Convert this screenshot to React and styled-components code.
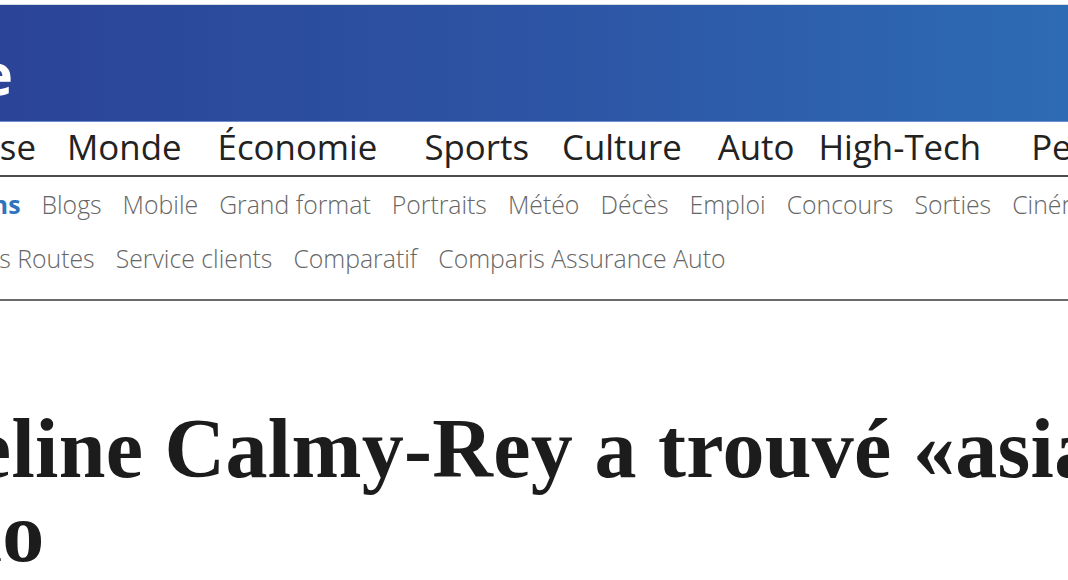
import React from 'react';
import styled, { createGlobalStyle } from 'styled-components';

const GlobalStyle = createGlobalStyle`
  html, body {
    margin: 0;
    padding: 0;
    background: #fff;
    overflow: hidden;
  }
  body {
    font-family: "Open Sans", "Liberation Sans", sans-serif;
  }
`;

const mainNav = [
  { label: 'Suisse', gap: 0 },
  { label: 'Monde', gap: 31 },
  { label: 'Économie', gap: 36 },
  { label: 'Sports', gap: 47 },
  { label: 'Culture', gap: 33 },
  { label: 'Auto', gap: 36 },
  { label: 'High-Tech', gap: 24 },
  { label: 'People', gap: 50 },
  { label: 'Vidéos', gap: 36 },
];

const subNavTop = [
  { label: 'Éditions', active: true },
  { label: 'Blogs' },
  { label: 'Mobile' },
  { label: 'Grand format' },
  { label: 'Portraits' },
  { label: 'Météo' },
  { label: 'Décès' },
  { label: 'Emploi' },
  { label: 'Concours' },
  { label: 'Sorties' },
  { label: 'Cinéma' },
  { label: 'Immobilier' },
];

const subNavBottom = [
  { label: 'État des Routes' },
  { label: 'Service clients' },
  { label: 'Comparatif' },
  { label: 'Comparis Assurance Auto' },
];

const App = () => {
  return (
    <>
      <GlobalStyle />
      <Sheet>
        <Banner>
          <LogoBox>
            <Logo>Tribune de Genève</Logo>
          </LogoBox>
        </Banner>
        <MainNav>
          {mainNav.map(item => (
            <MainLink key={item.label} $gap={item.gap}>{item.label}</MainLink>
          ))}
        </MainNav>
        <SubNav>
          <SubRow>
            {subNavTop.map(item => (
              <SubLink key={item.label} $active={item.active}>{item.label}</SubLink>
            ))}
          </SubRow>
          <SubRow>
            {subNavBottom.map(item => (
              <SubLink key={item.label}>{item.label}</SubLink>
            ))}
          </SubRow>
        </SubNav>
        <Article>
          <Headline>
            <HeadLine>Micheline Calmy-Rey a trouvé «asiatique» son séjour à</HeadLine>
            <HeadLine>Milano</HeadLine>
          </Headline>
        </Article>
      </Sheet>
    </>
  );
}

export default App;

const Sheet = styled.div`
  width: 1700px;
  margin-left: -240px;
  padding-top: 4px;
`

const Banner = styled.header`
  height: 116px;
  border-top: 1px solid #d9dbe3;
  border-bottom: 1px solid #6d8fcf;
  background: linear-gradient(90deg, #2a3f93 0%, #2b4497 240px, #2d55a5 800px, #2d6bb4 1308px, #2e72b8 1700px);
  display: flex;
  align-items: center;
`

const LogoBox = styled.div`
  width: 252px;
  display: flex;
  justify-content: flex-end;
  padding-top: 18px;
`

const Logo = styled.span`
  color: #fff;
  font-family: "Open Sans", sans-serif;
  font-weight: 700;
  font-size: 58px;
  white-space: nowrap;
  letter-spacing: -1px;
`

const MainNav = styled.nav`
  display: flex;
  padding: 1px 0 5px 174px;
  border-bottom: 2px solid #4a4a4a;
  white-space: nowrap;
`

const MainLink = styled.a`
  margin-left: ${p => p.$gap}px;
  font-size: 34.85px;
  color: #222;
  text-decoration: none;
`

const SubNav = styled.nav`
  padding: 0 0 14px 161px;
  border-bottom: 2px solid #6a6a6a;
`

const SubRow = styled.div`
  display: flex;
  gap: 21px;
  line-height: 54px;
  white-space: nowrap;
`

const SubLink = styled.a`
  font-size: 24.8px;
  font-weight: ${p => (p.$active ? 700 : 300)};
  color: ${p => (p.$active ? '#2f73bd' : '#666')};
  text-decoration: none;
`

const Article = styled.article`
  padding: 106px 0 0 26px;
`

const Headline = styled.h1`
  margin: 0;
  font-family: "Liberation Serif", "Times New Roman", serif;
  font-weight: 700;
  font-size: 84px;
  line-height: 84px;
  letter-spacing: 0.3px;
  color: #1c1c1c;
`

const HeadLine = styled.span`
  display: block;
  white-space: nowrap;
`
